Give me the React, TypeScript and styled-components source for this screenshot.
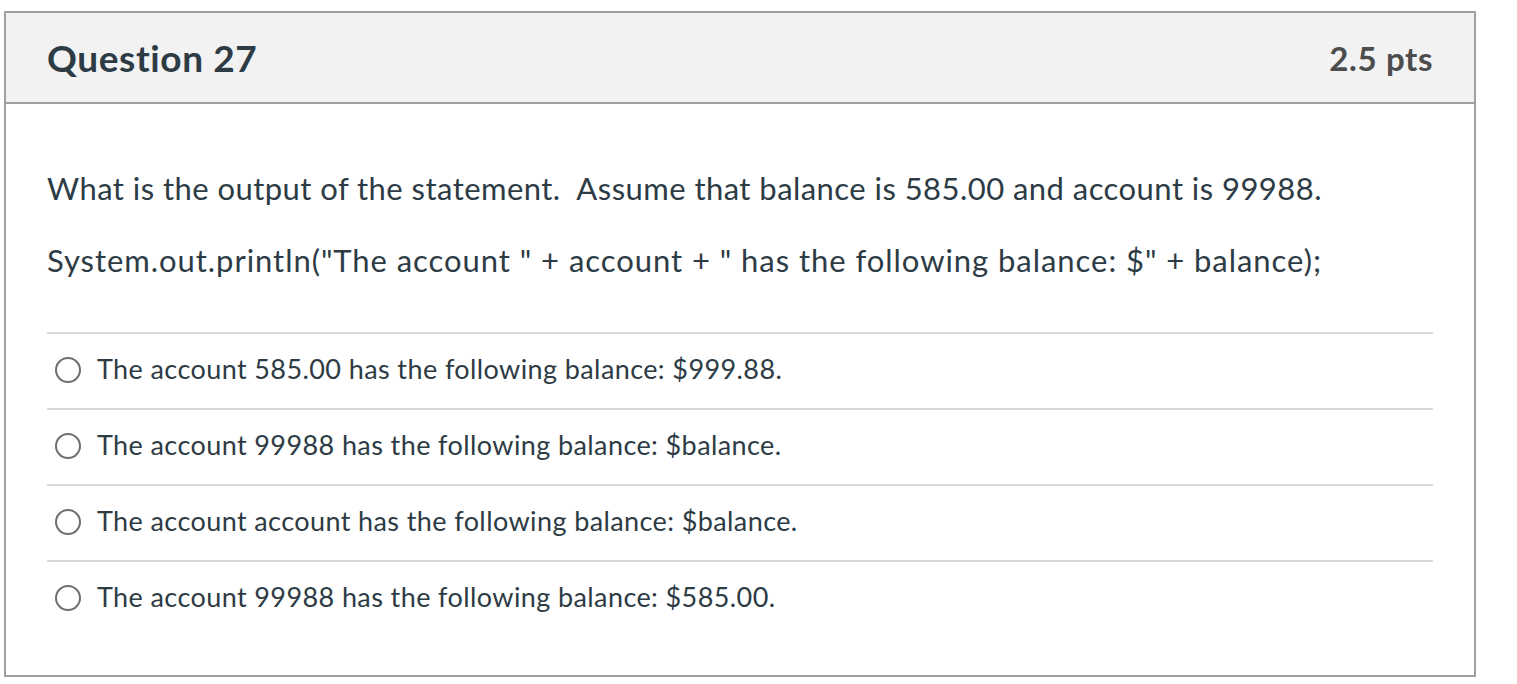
import styled, { createGlobalStyle } from "styled-components";

const GlobalStyle = createGlobalStyle`
  body {
    margin: 0;
    background: #ffffff;
    font-family: Lato, "Liberation Sans", sans-serif;
    color: #2d3b45;
  }
`;

const Page = styled.div`
  padding: 11px 0 0 4px;
`;

const Card = styled.div`
  box-sizing: border-box;
  width: 1472px;
  height: 666px;
  border: 2px solid #a0a0a0;
  display: flex;
  flex-direction: column;
`;

const Header = styled.div`
  box-sizing: border-box;
  height: 91px;
  background: #f2f2f2;
  border-bottom: 2px solid #a0a0a0;
  padding: 0 41px;
  display: flex;
  align-items: center;
  justify-content: space-between;
`;

const Title = styled.div`
  font-size: 37px;
  font-weight: 700;
  letter-spacing: 0.6px;
  color: #2d3b45;
`;

const Points = styled.div`
  font-size: 33px;
  font-weight: 700;
  letter-spacing: 0.6px;
  color: #4c4c4c;
`;

const Body = styled.div`
  padding: 66px 41px 0;
`;

const QuestionText = styled.p<{ $spacing: number }>`
  margin: 0 0 36px;
  font-size: 31px;
  line-height: 36px;
  letter-spacing: ${(p) => p.$spacing}px;
  white-space: nowrap;
  &:last-child {
    margin-bottom: 54px;
  }
`;

const AnswerList = styled.div`
  display: flex;
  flex-direction: column;
`;

const AnswerRow = styled.label`
  box-sizing: border-box;
  height: 76px;
  border-top: 2px solid #d7d7d7;
  display: flex;
  align-items: center;
  gap: 16px;
  padding-left: 8px;
  font-size: 27px;
  letter-spacing: 0.4px;
`;

const AnswerText = styled.span`
  margin-top: -6px;
`;

const Radio = styled.span`
  box-sizing: border-box;
  width: 26px;
  height: 26px;
  border: 2px solid #6e6e6e;
  border-radius: 50%;
  flex-shrink: 0;
  margin-top: -2px;
`;

const answers = [
  "The account 585.00 has the following balance: $999.88.",
  "The account 99988 has the following balance: $balance.",
  "The account account has the following balance: $balance.",
  "The account 99988 has the following balance: $585.00.",
];

export default function App() {
  return (
    <>
      <GlobalStyle />
      <Page>
        <Card>
          <Header>
            <Title>Question 27</Title>
            <Points>2.5 pts</Points>
          </Header>
          <Body>
            <div>
              <QuestionText $spacing={0.45}>
                What is the output of the statement.&nbsp; Assume that balance is 585.00 and account is 99988.
              </QuestionText>
              <QuestionText $spacing={0.95}>
                System.out.println("The account " + account + " has the following balance: $" + balance);
              </QuestionText>
            </div>
            <AnswerList>
              {answers.map((a) => (
                <AnswerRow key={a}>
                  <Radio />
                  <AnswerText>{a}</AnswerText>
                </AnswerRow>
              ))}
            </AnswerList>
          </Body>
        </Card>
      </Page>
    </>
  );
}
